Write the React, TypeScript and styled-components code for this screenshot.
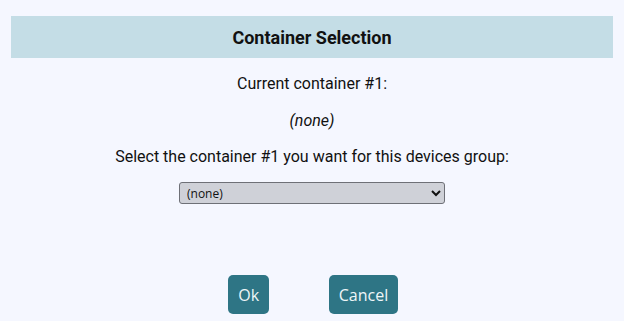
import React from 'react'
import styled, { createGlobalStyle } from 'styled-components'

const GlobalStyle = createGlobalStyle`
  html, body {
    margin: 0;
    padding: 0;
    background: #f5f7ff;
  }
  body {
    font-family: Roboto, "Liberation Sans", sans-serif;
    color: #111;
  }
`

const Page = styled.div`
  width: 624px;
  height: 321px;
  box-sizing: border-box;
  padding: 16px 11px 0 11px;
  display: flex;
  flex-direction: column;
  align-items: center;
`

const Header = styled.div`
  width: 100%;
  height: 42px;
  background: #c4dde6;
  display: flex;
  align-items: center;
  justify-content: center;
  font-size: 18px;
  font-weight: 700;
  color: #111;
`

const Line = styled.div<{ $italic?: boolean; $top: number }>`
  margin-top: ${p => p.$top}px;
  font-size: 16px;
  line-height: 20px;
  font-style: ${p => (p.$italic ? 'italic' : 'normal')};
  text-align: center;
`

const Select = styled.select`
  margin-top: 15px;
  width: 266px;
  height: 22px;
  box-sizing: border-box;
  background: #cfd1d8;
  border: 1px solid #6e7077;
  border-radius: 3px;
  font-family: "Open Sans", "Noto Sans", sans-serif;
  font-size: 12px;
  color: #111;
  padding: 0 3px;
`

const Buttons = styled.div`
  margin-top: 71px;
  padding-left: 2px;
  display: flex;
  gap: 60px;
`

const Button = styled.button`
  height: 39px;
  padding: 0 9.5px;
  min-width: 41px;
  border: none;
  border-radius: 5px;
  background: #2e7585;
  color: #eef6f8;
  font-family: "Open Sans", "Noto Sans", sans-serif;
  font-size: 16px;
`

export default function App() {
  return (
    <>
      <GlobalStyle />
      <Page>
        <Header>Container Selection</Header>
        <Line $top={16}>Current container #1:</Line>
        <Line $top={17} $italic>
          (none)
        </Line>
        <Line $top={16}>Select the container #1 you want for this devices group:</Line>
        <Select defaultValue="none">
          <option value="none">(none)</option>
        </Select>
        <Buttons>
          <Button>Ok</Button>
          <Button>Cancel</Button>
        </Buttons>
      </Page>
    </>
  )
}
